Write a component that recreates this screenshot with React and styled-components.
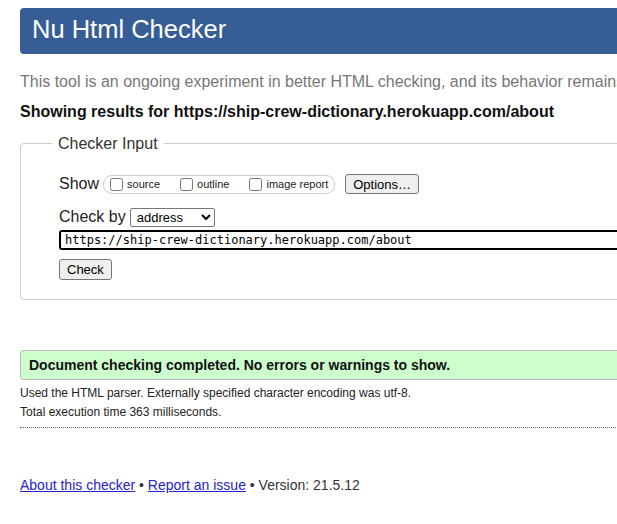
import React from 'react';
import styled, { createGlobalStyle } from 'styled-components';

const GlobalStyle = createGlobalStyle`
  html, body {
    margin: 0;
    padding: 0;
    background: #fff;
    overflow: hidden;
  }
  body {
    font-family: Arial, "Liberation Sans", sans-serif;
    color: #222;
  }
`;

const Page = styled.div`
  width: 1100px;
  padding: 8px 0 0 20px;
`;

const Header = styled.h1`
  margin: 0;
  height: 46px;
  box-sizing: border-box;
  padding: 0 12px;
  background: #365d95;
  border-radius: 4px;
  color: #fff;
  font-size: 25.5px;
  font-weight: normal;
  line-height: 42px;
`;

const Intro = styled.p`
  margin: 18px 0 0;
  font-size: 16px;
  line-height: 19px;
  color: #777;
  white-space: nowrap;
`;

const ResultsFor = styled.p`
  margin: 11px 0 0;
  font-size: 16px;
  font-weight: bold;
  line-height: 19px;
  color: #111;
`;

const InputSet = styled.fieldset`
  margin: 13px 0 0;
  padding: 21px 20px 19px 31px;
  border: 1px solid #ccc;
  border-radius: 4px;
`;

const Legend = styled.legend`
  padding: 0 6px;
  font-size: 16px;
  line-height: 19px;
  color: #333;
`;

const Inner = styled.div`
  padding-left: 7px;
`;

const Row = styled.div`
  display: flex;
  align-items: center;
  height: ${(p) => p.h || 20}px;
  margin-top: ${(p) => p.mt || 0}px;
  font-size: 16px;
  color: #222;
`;

const ShowGroup = styled.span`
  display: inline-flex;
  align-items: center;
  height: 19px;
  box-sizing: border-box;
  margin-left: 4px;
  padding: 0 6px 0 2px;
  border: 1px solid #ccc;
  border-radius: 9px;
`;

const Choice = styled.label`
  display: inline-flex;
  align-items: center;
  margin-right: ${(p) => (p.last ? 0 : 16)}px;
  font-size: 11px;
  color: #222;
`;

const Box = styled.input`
  width: 13px;
  height: 13px;
  margin: 0 4px 0 4px;
`;

const Button = styled.button`
  height: ${(p) => p.h || 20}px;
  margin-left: ${(p) => p.ml || 0}px;
  padding: 0 7px;
  font-family: Arial, "Liberation Sans", sans-serif;
  font-size: 13px;
  color: #000;
  background: #efefef;
  border: 1px solid #767676;
  border-radius: 3px;
`;

const Select = styled.select`
  width: 85px;
  height: 19px;
  margin-left: 4px;
  padding: 0 0 0 2px;
  font-family: Arial, "Liberation Sans", sans-serif;
  font-size: 13px;
  color: #000;
  background: #fff;
  border: 1px solid #767676;
  border-radius: 2px;
`;

const UrlInput = styled.input`
  display: block;
  width: 1000px;
  height: 20px;
  box-sizing: border-box;
  margin-top: 3px;
  padding: 0 4px;
  font-family: "DejaVu Sans Mono", "Liberation Mono", monospace;
  font-size: 12px;
  color: #000;
  border: 2px solid #000;
  border-radius: 3px;
  outline: none;
`;

const CheckRow = styled.div`
  margin-top: 9px;
`;

const Success = styled.p`
  margin: 50px 0 0;
  height: 30px;
  box-sizing: border-box;
  padding: 0 8px;
  background: #ccffcc;
  border: 1px solid #bbb;
  border-radius: 3px;
  font-size: 14px;
  font-weight: bold;
  line-height: 28px;
  color: #111;
`;

const Info = styled.p`
  margin: ${(p) => (p.first ? 4 : 0)}px 0 0;
  font-size: 12px;
  line-height: 19px;
  color: #222;
`;

const Divider = styled.div`
  margin-top: 5px;
  border-top: 1px dotted #666;
`;

const Footer = styled.p`
  margin: 49px 0 0;
  font-size: 14px;
  line-height: 17px;
  color: #333;
`;

const Link = styled.a`
  color: #2424c8;
  text-decoration: underline;
`;

const App = () => {
  const url = 'https://ship-crew-dictionary.herokuapp.com/about';

  return (
    <>
      <GlobalStyle />
      <Page>
        <Header>Nu Html Checker</Header>
        <Intro>
          This tool is an ongoing experiment in better HTML checking, and its behavior remains
          experimental, please report any issues.
        </Intro>
        <ResultsFor>Showing results for {url}</ResultsFor>

        <InputSet>
          <Legend>Checker Input</Legend>
          <Inner>
            <Row>
              Show
              <ShowGroup>
                <Choice>
                  <Box type="checkbox" />source
                </Choice>
                <Choice>
                  <Box type="checkbox" />outline
                </Choice>
                <Choice last>
                  <Box type="checkbox" />image report
                </Choice>
              </ShowGroup>
              <Button ml={10}>Options…</Button>
            </Row>
            <Row mt={13}>
              Check by
              <Select defaultValue="address">
                <option value="address">address</option>
                <option value="file">file upload</option>
                <option value="text">text input</option>
              </Select>
            </Row>
            <UrlInput type="url" defaultValue={url} />
            <CheckRow>
              <Button h={21}>Check</Button>
            </CheckRow>
          </Inner>
        </InputSet>

        <Success>Document checking completed. No errors or warnings to show.</Success>
        <Info first>Used the HTML parser. Externally specified character encoding was utf-8.</Info>
        <Info>Total execution time 363 milliseconds.</Info>
        <Divider />

        <Footer>
          <Link href="#about">About this checker</Link> • <Link href="#issue">Report an issue</Link> •
          Version: 21.5.12
        </Footer>
      </Page>
    </>
  );
};

export default App;
